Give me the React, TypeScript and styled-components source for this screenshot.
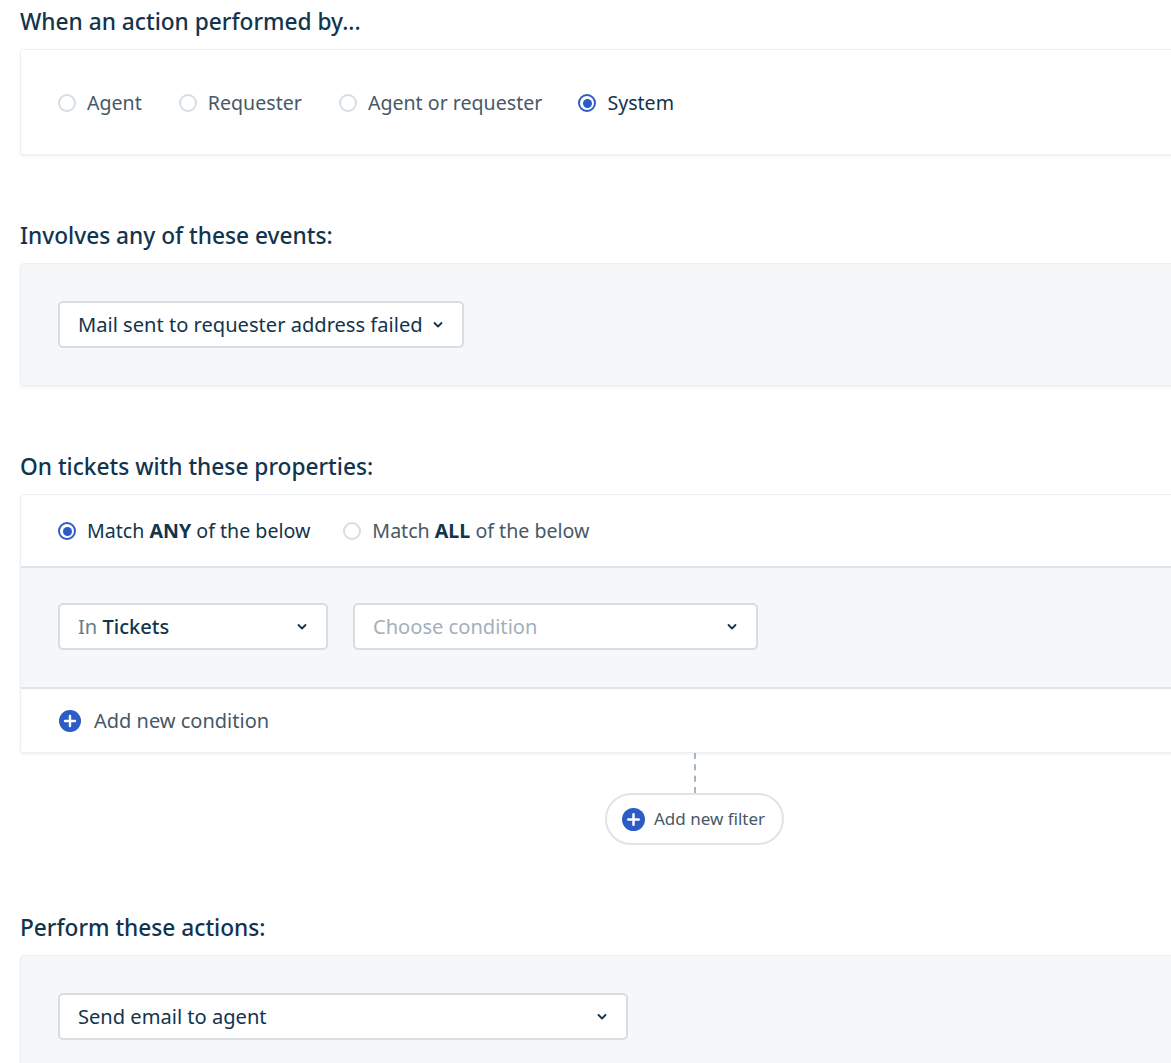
import React from "react";
import styled, { createGlobalStyle } from "styled-components";

const Global = createGlobalStyle`
  html, body { margin: 0; padding: 0; background: #ffffff; overflow: hidden; }
  body { font-family: "Noto Sans", "Open Sans", sans-serif; color: #12344d; }
  * { box-sizing: border-box; }
`;

const Page = styled.div`
  width: 1349px;
  margin-left: 20px;
  padding-top: 8px;
  display: flex;
  flex-direction: column;
`;

const Section = styled.section`
  display: flex;
  flex-direction: column;
  & + & { margin-top: 67px; }
`;

const Heading = styled.h2`
  margin: 0 0 13px 0;
  font-size: 22.7px;
  line-height: 28px;
  font-weight: 500;
  color: #12344d;
  white-space: nowrap;
`;

const Panel = styled.div<{ $white?: boolean }>`
  background: ${(p) => (p.$white ? "#ffffff" : "#f5f7f9")};
  border: 1px solid #ebeff3;
  border-radius: 4px;
  box-shadow: 0 2px 3px rgba(18, 52, 77, 0.06);
  display: flex;
  flex-direction: column;
  overflow: hidden;
`;

const PanelBody = styled.div<{ $pt: number; $pb: number; $gray?: boolean; $divider?: boolean }>`
  padding: ${(p) => `${p.$pt}px 37px ${p.$pb}px`};
  background: ${(p) => (p.$gray ? "#f5f7f9" : "#ffffff")};
  border-top: ${(p) => (p.$divider ? "2px solid #dfe4e9" : "none")};
  display: flex;
  align-items: center;
  gap: 25px;
`;

const RadioRow = styled.div`
  display: flex;
  align-items: center;
  height: 24px;
`;

const RadioOption = styled.label<{ $gap: number }>`
  display: flex;
  align-items: center;
  height: 24px;
  margin-right: ${(p) => p.$gap}px;
  font-size: 19.6px;
  line-height: 24px;
  color: #475867;
  white-space: nowrap;
  cursor: pointer;
`;

const RadioLabel = styled.span<{ $active?: boolean }>`
  margin-left: 11px;
  color: ${(p) => (p.$active ? "#12344d" : "#475867")};
  b { font-weight: 700; color: #12344d; }
`;

const RadioCircle = styled.span<{ $checked?: boolean }>`
  width: 18px;
  height: 18px;
  border-radius: 50%;
  border: 2px solid ${(p) => (p.$checked ? "#2c5cc5" : "#d6dde3")};
  background: #ffffff;
  display: flex;
  align-items: center;
  justify-content: center;
  flex: none;
  &::after {
    content: "";
    width: 9px;
    height: 9px;
    border-radius: 50%;
    background: ${(p) => (p.$checked ? "#2c5cc5" : "transparent")};
  }
`;

const Select = styled.div<{ $width?: number; $placeholder?: boolean }>`
  width: ${(p) => (p.$width ? `${p.$width}px` : "auto")};
  height: 47px;
  background: #ffffff;
  border: 2px solid #d6dde3;
  border-radius: 5px;
  display: flex;
  align-items: center;
  justify-content: space-between;
  gap: 9px;
  padding: 0 18px 0 18px;
  font-size: 20.1px;
  line-height: 24px;
  white-space: nowrap;
  color: ${(p) => (p.$placeholder ? "#a3b0bc" : "#12344d")};
  flex: none;
  .muted { color: #6b7c8b; }
  b { font-weight: 500; color: #12344d; }
`;

const Chevron = () => (
  <svg width="12" height="8" viewBox="0 0 12 8" fill="none">
    <path d="M2.5 2l3.5 3.5 3.5-3.5" stroke="#12344d" strokeWidth="1.8" strokeLinecap="round" strokeLinejoin="round" />
  </svg>
);

const PlusIcon = ({ size }: { size: number }) => (
  <svg width={size} height={size} viewBox="0 0 22 22">
    <circle cx="11" cy="11" r="11" fill="#2c5cc5" />
    <path d="M11 6v10M6 11h10" stroke="#ffffff" strokeWidth="2.4" strokeLinecap="round" />
  </svg>
);

const AddCondition = styled.div`
  display: flex;
  align-items: center;
  gap: 13px;
  height: 24px;
  font-size: 20px;
  line-height: 24px;
  color: #475867;
  margin-left: 1px;
`;

const Connector = styled.div`
  display: flex;
  flex-direction: column;
  align-items: center;
  padding-bottom: 2px;
`;

const DashedLine = styled.div`
  width: 0;
  height: 40px;
  border-left: 2px dashed #a9b4be;
`;

const Pill = styled.button`
  height: 52px;
  width: 179px;
  border: 2px solid #dfe4e9;
  border-radius: 26px;
  background: #ffffff;
  display: flex;
  align-items: center;
  gap: 9px;
  padding: 0 0 0 15px;
  font-family: inherit;
  font-size: 17px;
  line-height: 22px;
  color: #475867;
  cursor: pointer;
`;

export default function App() {
  return (
    <>
      <Global />
      <Page>
        <Section>
          <Heading>When an action performed by...</Heading>
          <Panel>
            <PanelBody $pt={41} $pb={39}>
              <RadioRow>
                <RadioOption $gap={37}>
                  <RadioCircle />
                  <RadioLabel>Agent</RadioLabel>
                </RadioOption>
                <RadioOption $gap={37}>
                  <RadioCircle />
                  <RadioLabel>Requester</RadioLabel>
                </RadioOption>
                <RadioOption $gap={36}>
                  <RadioCircle />
                  <RadioLabel>Agent or requester</RadioLabel>
                </RadioOption>
                <RadioOption $gap={0}>
                  <RadioCircle $checked />
                  <RadioLabel $active>System</RadioLabel>
                </RadioOption>
              </RadioRow>
            </PanelBody>
          </Panel>
        </Section>

        <Section>
          <Heading>Involves any of these events:</Heading>
          <Panel>
            <PanelBody $pt={37} $pb={37} $gray>
              <Select>
                <span>Mail sent to requester address failed</span>
                <Chevron />
              </Select>
            </PanelBody>
          </Panel>
        </Section>

        <Section>
          <Heading>On tickets with these properties:</Heading>
          <Panel $white>
            <PanelBody $pt={24} $pb={23}>
              <RadioRow>
                <RadioOption $gap={33}>
                  <RadioCircle $checked />
                  <RadioLabel $active>
                    Match <b>ANY</b> of the below
                  </RadioLabel>
                </RadioOption>
                <RadioOption $gap={0}>
                  <RadioCircle />
                  <RadioLabel>
                    Match <b>ALL</b> of the below
                  </RadioLabel>
                </RadioOption>
              </RadioRow>
            </PanelBody>
            <PanelBody $pt={35} $pb={37} $gray $divider>
              <Select $width={270}>
                <span>
                  <span className="muted">In</span> <b>Tickets</b>
                </span>
                <Chevron />
              </Select>
              <Select $width={405} $placeholder>
                <span>Choose condition</span>
                <Chevron />
              </Select>
            </PanelBody>
            <PanelBody $pt={20} $pb={19} $divider>
              <AddCondition>
                <PlusIcon size={22} />
                <span>Add new condition</span>
              </AddCondition>
            </PanelBody>
          </Panel>
          <Connector>
            <DashedLine />
            <Pill>
              <PlusIcon size={23} />
              <span>Add new filter</span>
            </Pill>
          </Connector>
        </Section>

        <Section>
          <Heading>Perform these actions:</Heading>
          <Panel>
            <PanelBody $pt={37} $pb={40} $gray>
              <Select $width={570}>
                <span>Send email to agent</span>
                <Chevron />
              </Select>
            </PanelBody>
          </Panel>
        </Section>
      </Page>
    </>
  );
}
